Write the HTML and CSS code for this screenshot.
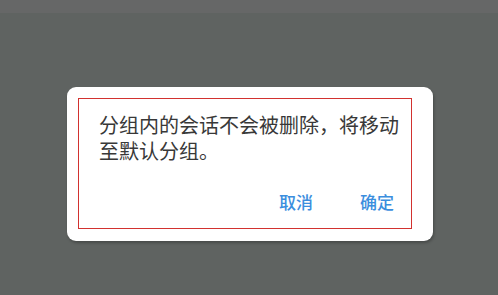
FILE: index.html
```html
<!DOCTYPE html>
<html lang="zh">
<head>
<meta charset="utf-8">
<link rel="stylesheet" href="styles.css">
</head>
<body>
<div class="topbar"></div>
<div class="overlay">
  <div class="dialog">
    <div class="frame">
      <p class="message">分组内的会话不会被删除，将移动至默认分组。</p>
      <div class="actions">
        <span class="btn">取消</span>
        <span class="btn">确定</span>
      </div>
    </div>
  </div>
</div>
</body>
</html>
```
FILE: styles.css
```css
html, body {
  margin: 0;
  padding: 0;
  width: 498px;
  height: 295px;
  overflow: hidden;
  background: #5f6361;
  font-family: "Noto Sans CJK SC", "Noto Sans", sans-serif;
}
.topbar {
  height: 13px;
  background: #666767;
}
.overlay {
  padding-top: 74px;
  padding-left: 67px;
}
.dialog {
  width: 366px;
  height: 154px;
  box-sizing: border-box;
  padding: 11px 0 0 11px;
  background: #ffffff;
  border-radius: 9px;
  box-shadow: 1px 2px 3px rgba(0, 0, 0, 0.25);
}
.frame {
  width: 334px;
  height: 131px;
  box-sizing: border-box;
  border: 1px solid #d2322f;
  display: flex;
  flex-direction: column;
  justify-content: space-between;
}
.message {
  margin: 0;
  padding: 13px 10px 0 20px;
  font-size: 20px;
  line-height: 26px;
  color: #383838;
}
.actions {
  display: flex;
  justify-content: flex-end;
  gap: 47px;
  padding: 0 17px 16px 0;
}
.btn {
  font-size: 17px;
  line-height: 20px;
  color: #3b8ede;
  font-weight: 500;
}
```
